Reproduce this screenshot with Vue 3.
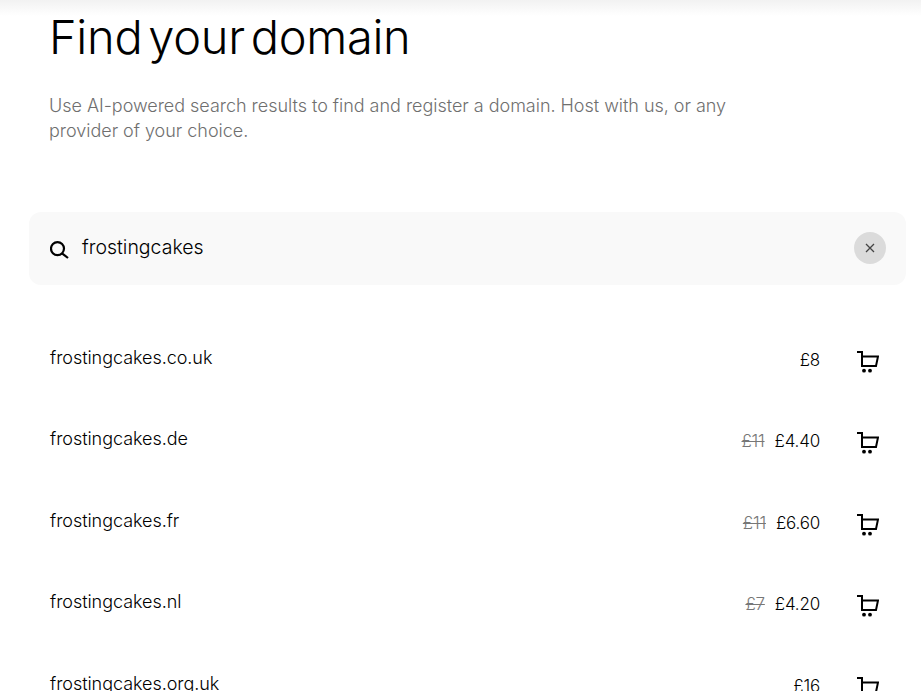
<script setup>
const rows = [
  { name: 'frostingcakes.co.uk', price: '£8' },
  { name: 'frostingcakes.de', old: '£11', price: '£4.40' },
  { name: 'frostingcakes.fr', old: '£11', price: '£6.60' },
  { name: 'frostingcakes.nl', old: '£7', price: '£4.20' },
  { name: 'frostingcakes.org.uk', price: '£16' },
]
</script>

<template>
  <div class="page">
    <div class="shade"></div>
    <h1 class="title">Find your domain</h1>
    <p class="lead">Use AI-powered search results to find and register a domain. Host with us, or any provider of your choice.</p>
    <div class="search">
      <svg class="glass" width="20" height="20" viewBox="0 0 20 20" fill="none" stroke="#000" stroke-width="2.2">
        <circle cx="7.5" cy="8.6" r="6.5" />
        <path d="M12 13.3 18 18" />
      </svg>
      <span class="query">frostingcakes</span>
      <span class="clear">
        <svg width="10" height="10" viewBox="0 0 10 10" fill="none" stroke="#444" stroke-width="1.3">
          <path d="M1 1l8 8M9 1l-8 8" />
        </svg>
      </span>
    </div>
    <ul class="results">
      <li v-for="r in rows" :key="r.name" class="row">
        <span class="name">{{ r.name }}</span>
        <span class="prices">
          <s v-if="r.old" class="old">{{ r.old }}</s>
          <span class="price">{{ r.price }}</span>
        </span>
        <svg class="cart" width="23" height="24" viewBox="0 0 23 24" fill="none" stroke="#000" stroke-width="2">
          <path d="M1 2H6V16H20L22 6.5H6" />
          <circle cx="8" cy="20.7" r="1.9" fill="#000" stroke="none" />
          <circle cx="14" cy="20.7" r="1.9" fill="#000" stroke="none" />
        </svg>
      </li>
    </ul>
  </div>
</template>

<style>
html, body { margin: 0; background: #fff; overflow: hidden; }
</style>

<style scoped>
.page {
  position: relative;
  width: 921px;
  height: 691px;
  overflow: hidden;
  box-sizing: border-box;
  padding: 0 15px 0 29px;
  font-family: Inter, "Liberation Sans", sans-serif;
  color: #000;
}
.shade {
  position: absolute;
  top: 0;
  left: 0;
  right: 0;
  height: 16px;
  background: linear-gradient(#f2f2f2, #fff);
}
.title {
  position: relative;
  margin: 0 0 0 20px;
  padding-top: 9px;
  font-size: 47px;
  line-height: 56px;
  font-weight: 320;
  letter-spacing: -0.3px;
  word-spacing: -7px;
}
.lead {
  margin: 28px 0 0 20px;
  width: 700px;
  font-size: 18px;
  line-height: 25px;
  font-weight: 320;
  letter-spacing: -0.025px;
  color: #6f6f6f;
}
.search {
  display: flex;
  align-items: center;
  height: 73px;
  margin-top: 69px;
  padding: 0 20px 0 21px;
  background: #f9f9f9;
  border-radius: 12px;
}
.glass { margin-top: 2px; }
.query {
  flex: 1;
  margin-left: 12px;
  margin-top: -4px;
  font-size: 19.5px;
  font-weight: 340;
}
.clear {
  display: flex;
  align-items: center;
  justify-content: center;
  width: 32px;
  height: 32px;
  margin-top: -2px;
  border-radius: 50%;
  background: #dbdbdb;
}
.results {
  list-style: none;
  margin: 60.6px 0 0;
  padding: 0 27px 0 21px;
}
.row {
  display: flex;
  align-items: flex-start;
  height: 81.5px;
}
.name {
  flex: 1;
  font-size: 18px;
  line-height: 24px;
  font-weight: 340;
  letter-spacing: -0.05px;
}
.prices {
  display: flex;
  gap: 10px;
  margin-top: 2px;
  font-size: 17px;
  line-height: 24px;
  font-weight: 340;
  letter-spacing: -0.2px;
}
.old { color: #777; }
.cart { margin: 4px 0 0 36px; }
</style>
